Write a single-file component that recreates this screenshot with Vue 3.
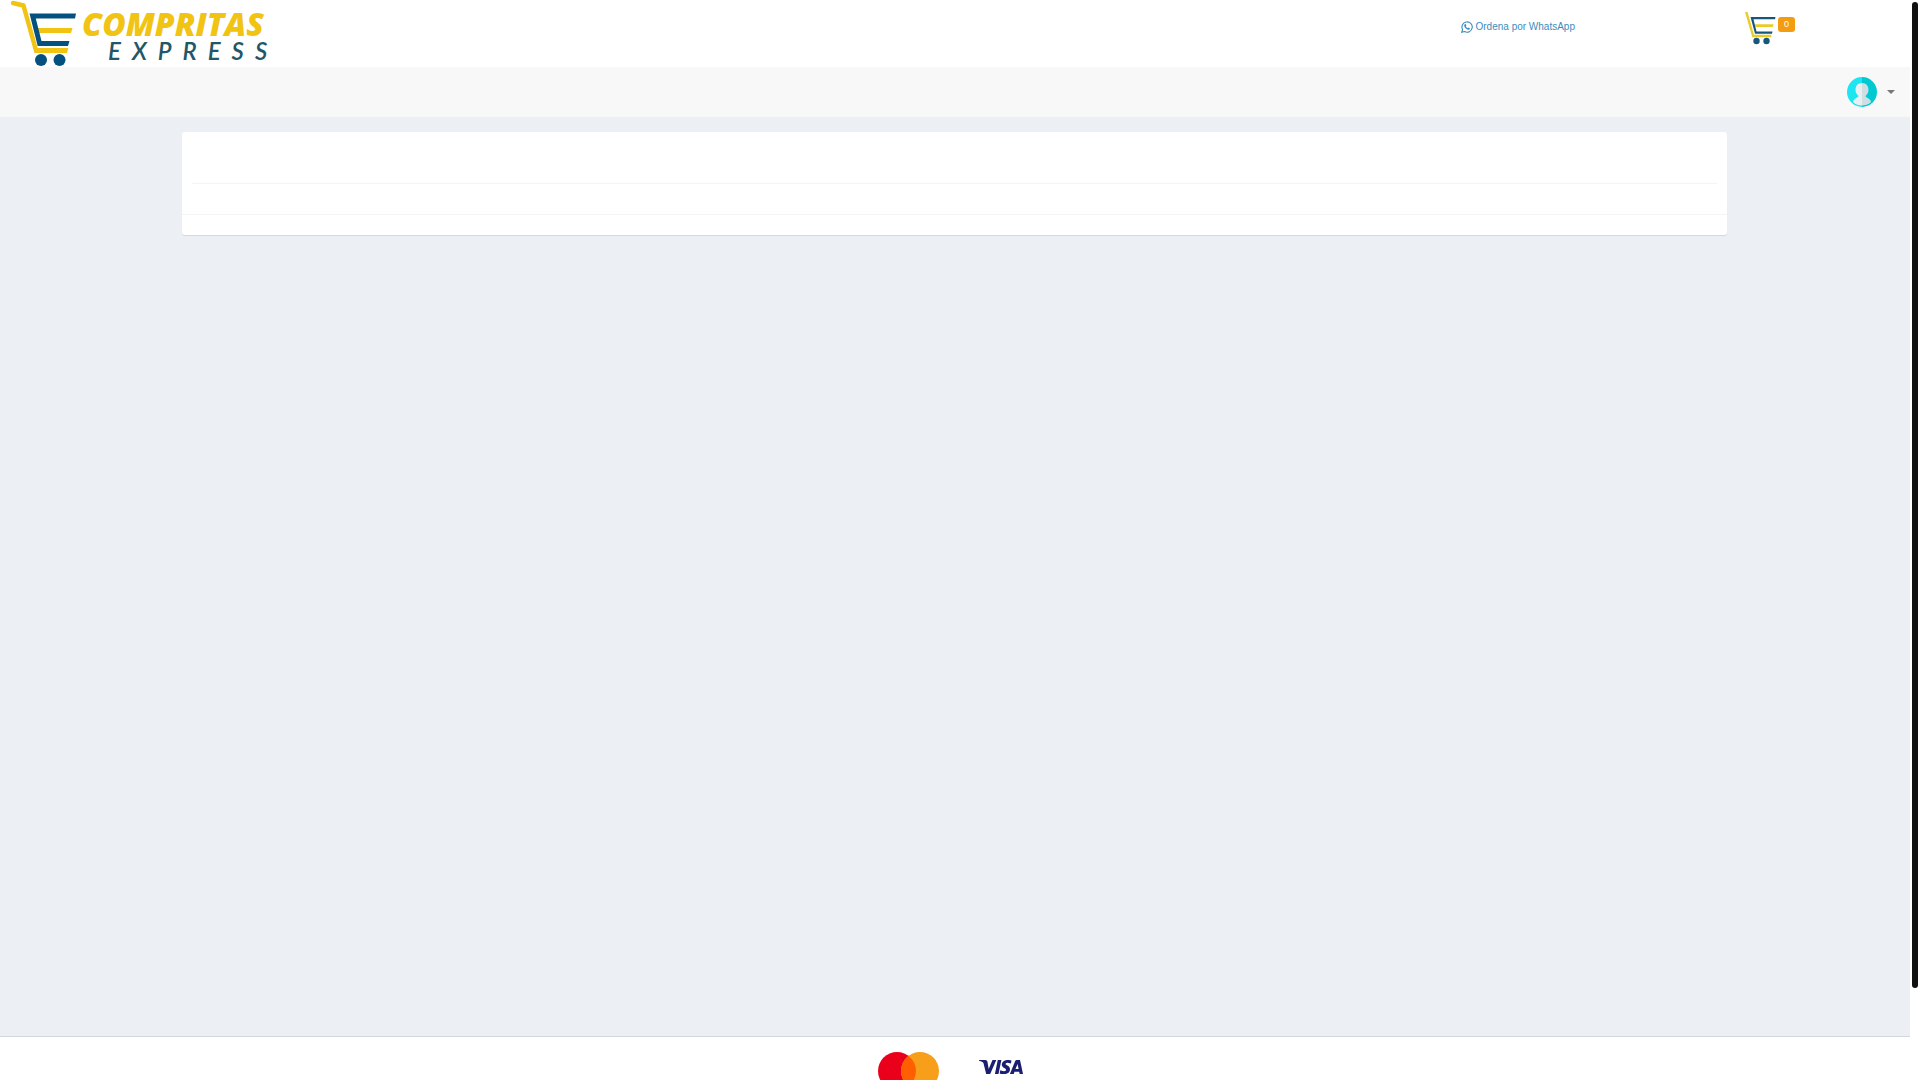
<script setup>
import { ref } from 'vue'

const cartCount = ref(0)
</script>

<template>
  <div class="shell">
    <div class="page">
      <header class="top">
        <a class="brand" href="#" aria-label="Compritas Express">
          <svg class="logo" width="290" height="67" viewBox="0 0 290 67">
            <path d="M13 3L23.500 5.500L36 50.500" fill="none" stroke="#f1c313" stroke-width="4.500" stroke-linecap="round" stroke-linejoin="round" />
            <path d="M34 48H68.300L67 53H34.500z" fill="#f1c313" />
            <path d="M37.500 28H72.500L71 33H38.800z" fill="#f1c313" />
            <path d="M29.500 13.500H76L75 18.500H35.800L41.500 41H69.500L68 46H37.700z" fill="#04507f" />
            <circle cx="41" cy="60" r="6" fill="#04507f" />
            <circle cx="59.500" cy="60" r="6" fill="#04507f" />
            <text class="word" x="82" y="36">COMPRITAS</text>
            <text class="subword" x="108" y="60">EXPRESS</text>
          </svg>
        </a>
        <a class="whatsapp" href="#">
          <svg width="12" height="12" viewBox="0 0 24 24" fill="none" stroke="currentColor">
            <path d="M1.500 22.500L3.200 17A10.300 10.300 0 1 1 7.200 21z" stroke-width="2.200" />
            <path d="M7.500 6.500L9.500 6.200L10.700 9L9.700 10.600C10.600 12.600 11.800 13.600 13.700 14.400L15 13L17.800 14.400C17.900 16.400 16.200 17.600 14.500 17.400C10.500 16.800 7.200 13.300 6.400 10C6.100 8.500 6.600 7.200 7.500 6.500z" fill="currentColor" stroke="none" />
          </svg>
          <span>Ordena por WhatsApp</span>
        </a>
        <a class="cart" href="#" aria-label="Carrito">
          <svg width="32" height="34" viewBox="0 0 32 34">
            <path d="M0 0H2.500L9 22.800H26.500L26 25.200H7.300z" fill="#ebcb28" />
            <path d="M10 12.300H28.500L28 15H10.500z" fill="#ebcb28" />
            <path d="M5.500 5H30.500L30 7.300H8.500L11.500 19.500H27.500L27 21.800H10z" fill="#17577c" />
            <circle cx="11.500" cy="29" r="3.200" fill="#17577c" />
            <circle cx="21.500" cy="29" r="3.200" fill="#17577c" />
          </svg>
          <span class="badge">{{ cartCount }}</span>
        </a>
      </header>

      <nav class="bar">
        <button class="account" type="button" aria-label="Cuenta">
          <svg width="30" height="30" viewBox="0 0 30 30">
            <defs>
              <clipPath id="disc"><circle cx="15" cy="15" r="15" /></clipPath>
            </defs>
            <g clip-path="url(#disc)">
              <path d="M0 0H15V30H0z" fill="#1ee6f0" />
              <path d="M15 0H30V30H15z" fill="#00c9d2" />
              <path d="M15 6C10.500 6 8.500 9 8.500 13C8.500 16 10 17.500 11.500 19C11 21 6.500 21.500 6 25C8.500 27.700 12 28.500 15 28.500z" fill="#e6eff1" />
              <path d="M15 6C19.500 6 21.500 9 21.500 13C21.500 16 20 17.500 18.500 19C19 21 23.500 21.500 24 25C21.500 27.700 18 28.500 15 28.500z" fill="#cfdee2" />
            </g>
          </svg>
          <span class="caret"></span>
        </button>
      </nav>

      <main class="content">
        <section class="card">
          <div class="card-head"></div>
          <div class="card-body"></div>
          <div class="card-foot"></div>
        </section>
      </main>

      <footer class="payments">
        <svg width="62" height="38" viewBox="0 0 62 38" role="img" aria-label="Mastercard">
          <circle cx="19" cy="19" r="19" fill="#eb001b" />
          <circle cx="42" cy="19" r="19" fill="#f79e1b" />
          <path d="M30.500 3.900A19 19 0 0 1 30.500 34.100A19 19 0 0 1 30.500 3.900z" fill="#ff5f00" />
        </svg>
        <svg class="visa" width="44" height="14" viewBox="0 0 44 14" role="img" aria-label="Visa" fill="#1a1f71">
          <path d="M0 0H6.500Q8 0 8.400 1.500L9.700 9L13.500 0H17.300L11.200 14H7.200L4.500 3.300Q4.200 2.300 3.300 1.900Q1.800 1.200 0 .8z" />
          <path d="M18.800 0H22.400L19.500 14H15.900z" />
          <path d="M32.500 .6L31.900 3.500Q26.700 1.700 26.600 4C26.600 5.300 31 5.700 31 9.200C31 14 25 14.900 20.700 13.400L21.300 10.300Q27 12.300 27.200 9.800C27.200 8.300 22.800 8.200 22.800 4.600C22.900 .3 28.300 -1 32.500 .6z" />
          <path fill-rule="evenodd" d="M37.700 0H41L44 14H40.600L40.200 11.800H35.500L34.700 14H30.900L36.200 1.100Q36.700 0 37.700 0zM38.600 4L36.500 9.100H39.600z" />
        </svg>
      </footer>
    </div>
    <div class="track"><div class="thumb"></div></div>
  </div>
</template>

<style>
body {
  margin: 0;
  background: #fff;
}
</style>

<style scoped>
.shell {
  display: flex;
  height: 100vh;
  overflow: hidden;
  font-family: "Liberation Sans", Arial, sans-serif;
}
.page {
  flex: 1;
  display: flex;
  flex-direction: column;
  min-width: 0;
}
.top {
  display: flex;
  align-items: flex-start;
  height: 67px;
  background: #fff;
}
.brand {
  flex: 1;
  height: 67px;
}
.logo {
  display: block;
}
.word {
  font: italic 800 32px "Open Sans", sans-serif;
  fill: #f1c313;
}
.subword {
  font: italic 600 24px Lato, sans-serif;
  letter-spacing: 11px;
  fill: #235767;
}
a {
  color: #3c8dbc;
  text-decoration: none;
}
.whatsapp {
  display: flex;
  align-items: center;
  gap: 3px;
  margin: 21px 170px 0 0;
  font-size: 10px;
  line-height: 12px;
}
.cart {
  display: flex;
  align-items: flex-start;
  gap: 1px;
  margin: 12px 115px 0 0;
}
.badge {
  margin-top: 5px;
  width: 17px;
  border-radius: 3px;
  background: #f39c12;
  color: #fff;
  font-size: 9px;
  line-height: 15px;
  text-align: center;
}
.bar {
  display: flex;
  justify-content: flex-end;
  align-items: center;
  height: 50px;
  padding-right: 15px;
  background: #f8f8f8;
}
.account {
  display: flex;
  align-items: center;
  gap: 10px;
  padding: 0;
  border: 0;
  background: none;
  color: #777;
}
.caret {
  border-top: 4px solid;
  border-right: 4px solid transparent;
  border-left: 4px solid transparent;
}
.content {
  flex: 1;
  padding: 15px 183px 0 182px;
  background: #ecf0f5;
}
.card {
  border-radius: 3px;
  background: #fff;
  box-shadow: 0 1px 1px rgba(0, 0, 0, 0.1);
}
.card-head {
  height: 51px;
  margin: 0 10px;
  border-bottom: 1px solid #f4f4f4;
}
.card-body {
  height: 30px;
}
.card-foot {
  height: 20px;
  border-top: 1px solid #f4f4f4;
}
.payments {
  display: flex;
  justify-content: center;
  align-items: flex-start;
  gap: 39px;
  height: 28px;
  padding: 15px 9px 0 0;
  border-top: 1px solid #d2d6de;
  background: #fff;
}
.payments svg {
  flex: none;
}
.visa {
  margin-top: 8px;
}
.track {
  display: flex;
  justify-content: center;
  width: 10px;
  padding: 2px 0;
  background: #fff;
}
.thumb {
  width: 6px;
  height: calc(100% - 90px);
  border-radius: 3px;
  background: #111;
}
</style>
